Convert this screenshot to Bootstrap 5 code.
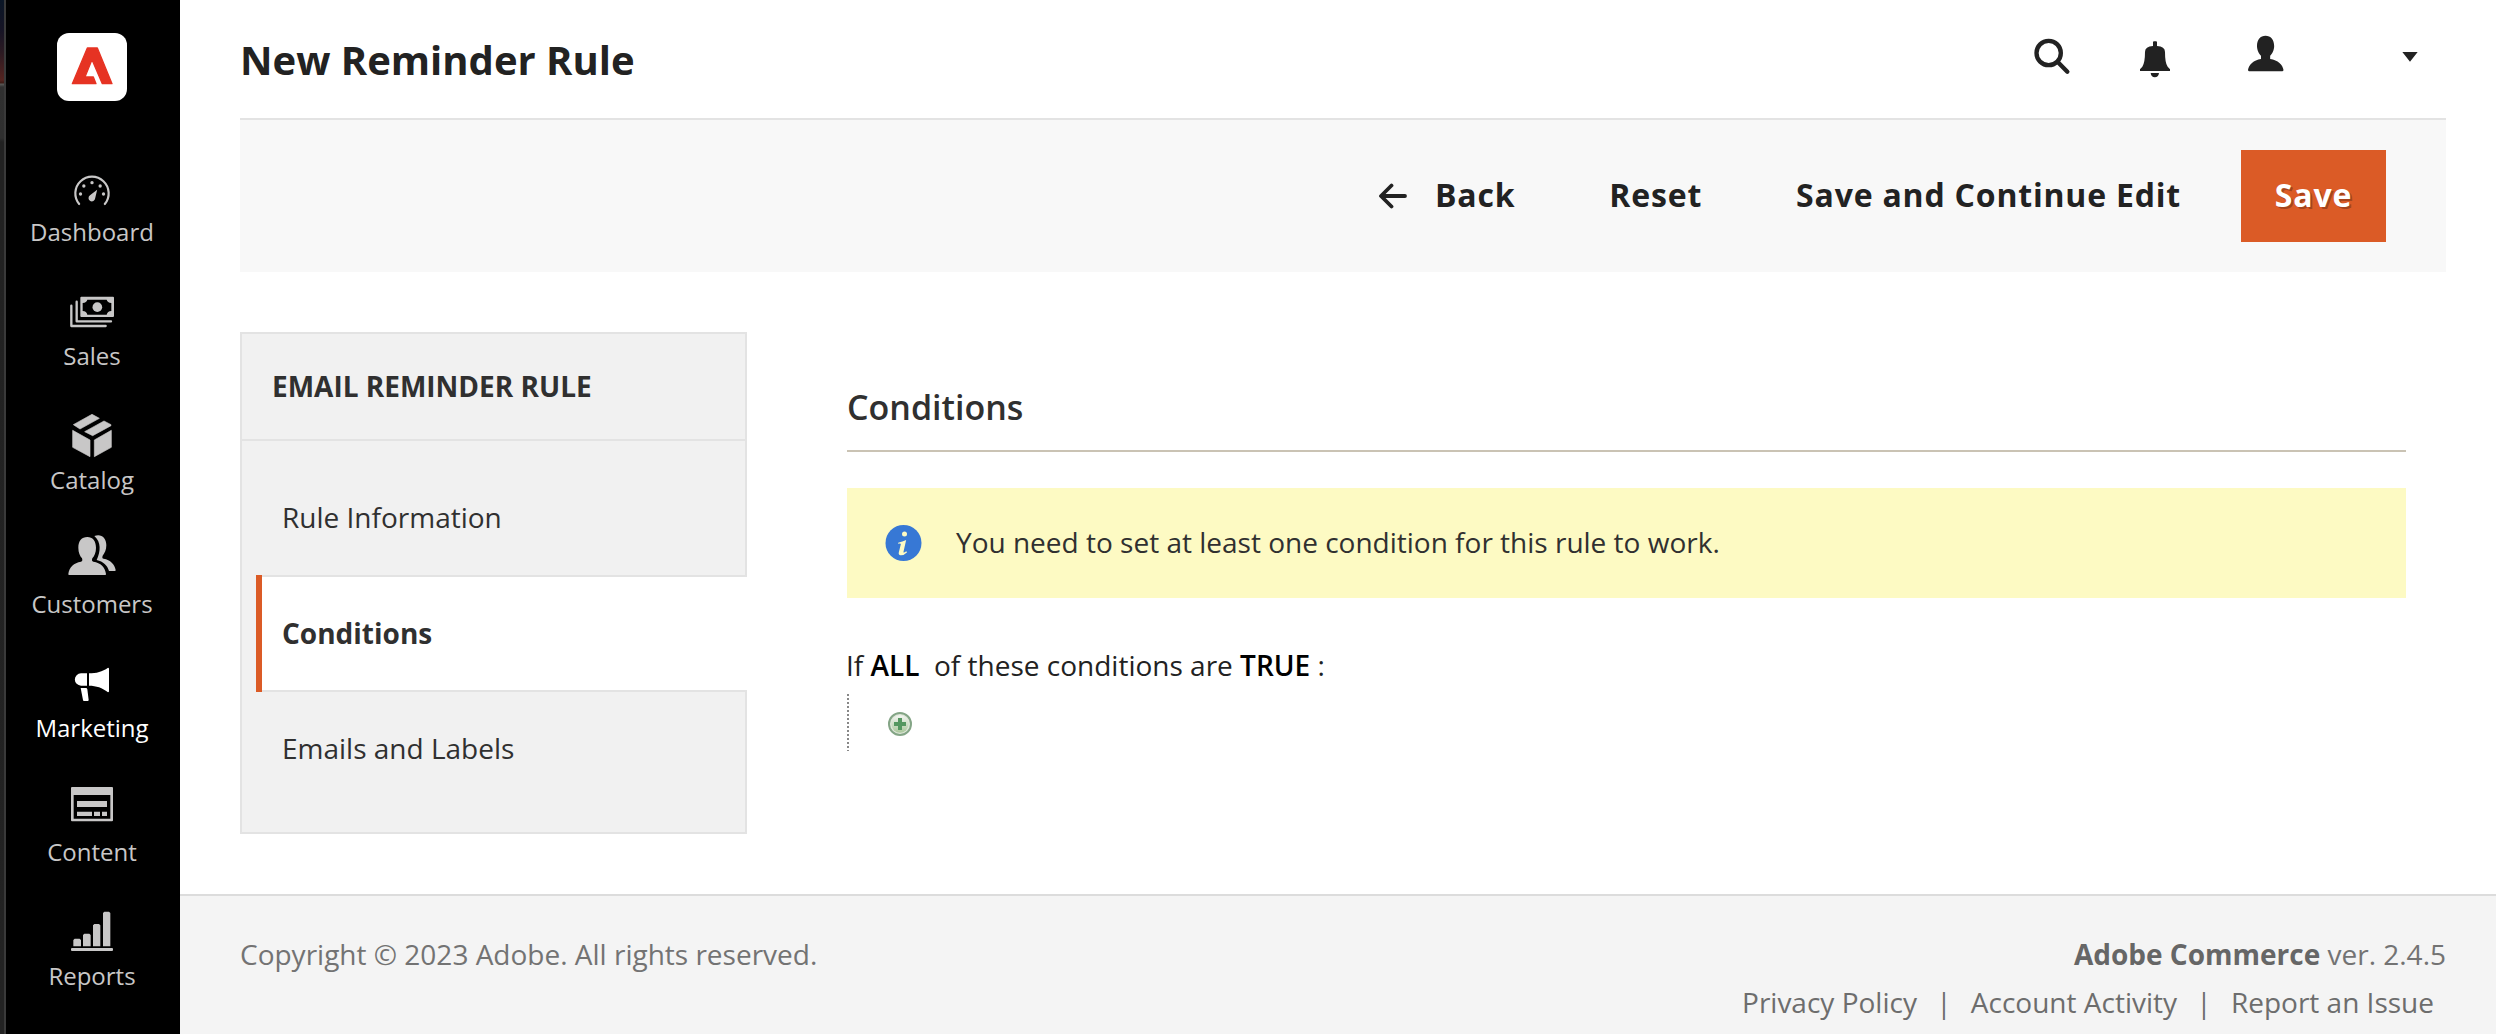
<!DOCTYPE html>
<html lang="en">
<head>
<meta charset="utf-8">
<meta name="viewport" content="width=device-width, initial-scale=1">
<title>New Reminder Rule</title>
<link href="https://cdn.jsdelivr.net/npm/bootstrap@5.3.0/dist/css/bootstrap.min.css" rel="stylesheet">
<style>
body{font-family:"Open Sans",sans-serif;font-size:28px;line-height:38px;color:#303030;background:#fff}
a{color:inherit;text-decoration:none}
svg{display:block;flex:none}
.shell{height:1034px;overflow:hidden}
.desk-edge{width:6px;flex:none;border-right:2px solid #3a3a3a;background:linear-gradient(#0a1626 0,#161425 30px,#2b1a22 52px,#552420 80px,#3a1a14 83px,#5a5a58 84px,#303030 87px,#2f2f2f 138px,#222 142px,#232323 100%)}
.side-menu{width:174px;flex:none;background:#000;color:#c8c7c7;padding-right:2px}
.brand{padding:33px 0 57px}
.side-menu .nav-link{padding:0;margin-bottom:37px;font-size:24px;line-height:27px;color:#c8c7c7}
.side-menu .nav-link.active{color:#fff}
.page-top{height:120px;margin:0 50px 0 60px;border-bottom:2px solid #e3e3e3;color:#222}
.page-top h1{font-size:40px;font-weight:700;line-height:54px;margin:0;padding-top:2px}
.actions{height:152px;margin:0 50px 0 60px;background:#f8f8f8;padding-right:60px;color:#222}
.actions .btn{font-size:32px;font-weight:700;line-height:44px;letter-spacing:.8px;padding:0 0 3px;border:0;border-radius:0;color:#222}
.actions .btn-reset{margin:0 94px}
.actions .btn-back{gap:27px}
.actions .btn-back svg{margin-top:2px}
.actions .btn-save{width:145px;height:92px;margin-left:60px;background:#db5b26;color:#fff;text-shadow:2px 2px 0 rgba(0,0,0,.25)}
.workspace{padding:60px 90px 0 60px;height:622px}
.tabs{width:507px;height:502px;flex:none;background:#f1f1f1;border:2px solid #e3e3e3}
.tabs h2{font-size:28px;font-weight:700;line-height:38px;height:107px;margin:0;padding:33px 30px 0;border-bottom:2px solid #e3e3e3}
.tabs .list{padding:20px 0 0 14px;margin-right:-2px}
.tabs .tab-item{display:block;padding:0 26px;line-height:38px}
.tabs .tab-item.first-tab{height:114px;padding-top:37px}
.tabs .tab-item.last-tab{padding-top:37px}
.tabs .tab-item.active{height:117px;font-weight:700;background:#fff;box-shadow:inset 0 2px #e3e3e3,inset 0 -2px #e3e3e3;border-left:6px solid #db5b26;padding:39px 20px}
.detail{margin-left:100px}
.detail h3{font-size:34px;font-weight:600;line-height:46px;margin:0;padding:52px 0 20px;border-bottom:2px solid #cac3b4}
.notice{height:110px;margin-top:36px;background:#fdfac3;padding-left:38px;gap:34px}
.notice span{padding-bottom:2px}
.rule-line{margin:48px 0 0 -1px;color:#222;white-space:pre}
.rule-line b{font-weight:600;color:#000}
.children{width:100px;height:57px;margin-top:10px;padding:18px 0 0 41px;background:repeating-linear-gradient(#888 0 2px,#fff 2px 4px) left top/2px 100% no-repeat}
.foot{height:140px;background:#f4f4f4;border-top:2px solid #dcdcdc;padding:39px 50px 0 60px;color:#737373}
.foot b{font-weight:700;color:#666}
.foot .links{margin-top:10px;padding-right:12px;gap:19.25px;color:#6d6d6d}
.tools{height:118px;padding-right:28px}
</style>
</head>
<body>
<div class="shell d-flex">
  <div class="desk-edge"></div>
  <aside class="side-menu">
    <div class="brand d-flex justify-content-center">
      <svg width="70" height="68" viewBox="0 0 210 204"><rect width="210" height="204" rx="36" fill="#fff"/><path fill="#e63323" stroke="#e63323" stroke-width="4" stroke-linejoin="round" d="M91 45h30l44 107h-29l-29-67h-4l-19 47h25l8 20H46z"/></svg>
    </div>
    <nav class="nav flex-column flex-nowrap text-center">
      <a class="nav-link" href="#">
        <svg class="mx-auto" width="60" height="60" viewBox="186 474 180 180"><path fill="none" stroke="#c8c7c7" stroke-width="6.500" stroke-linecap="round" d="M237.500 612A50 50 0 1 1 314.500 612"/><g fill="#c8c7c7"><circle cx="241.500" cy="582" r="5"/><circle cx="251.500" cy="558" r="5"/><circle cx="276" cy="548" r="5"/><circle cx="300.500" cy="558" r="5"/><circle cx="310.500" cy="582" r="5"/><path d="M291.500 569l-6 26a10 10 0 1 1-15.500-9z"/></g></svg>
        Dashboard</a>
      <a class="nav-link" href="#">
        <svg class="mx-auto" width="60" height="60" viewBox="186 846 180 180"><path fill="none" stroke="#c8c7c7" stroke-width="7" stroke-linecap="round" stroke-linejoin="round" d="M214 917v61h103M230 905v59h103"/><path fill="#c8c7c7" fill-rule="evenodd" d="M244 890h95q3 0 3 3v55q0 3-3 3h-95q-3 0-3-3v-55q0-3 3-3zM262 899q-2 9-14 10v24q12 1 14 11h58q2-10 14-11v-24q-12-1-14-10z"/><circle cx="292" cy="921.500" r="14.500" fill="#c8c7c7"/></svg>
        Sales</a>
      <a class="nav-link" href="#">
        <svg class="mx-auto" width="60" height="60" viewBox="186 138 180 180"><g fill="#c8c7c7" stroke="#c8c7c7" stroke-width="2" stroke-linejoin="round"><path d="M220 194l56-31 22 12-58 32zM254 215l58-32 21 11v3l-55 30zM218 211l52 29v50l-52-28zM334 211l-51 29v50l51-28z"/></g></svg>
        Catalog</a>
      <a class="nav-link" href="#">
        <svg class="mx-auto" width="60" height="60" viewBox="186 510 180 180"><g fill="#c8c7c7"><path d="M262 531c16 0 26 12 26 32 0 15-5 25-11 32-2 6-1 10 3 10 22 3 36 17 38 37q0 3-2 3H207q-2 0-2-3c2-20 17-34 38-37 4 0 5-4 3-10-6-7-11-17-11-32 0-20 10-32 27-32z"/><path d="M283 528c20-8 36 5 36 28 0 14-5 23-11 31-2 6-1 8 3 9 20 4 33 16 36 34q0 3-2 3h-18c-5-17-17-28-37-33 12-26 14-54-7-72z"/></g></svg>
        Customers</a>
      <a class="nav-link active" href="#">
        <svg class="mx-auto" width="60" height="60" viewBox="186 882 180 180"><g fill="#fff"><path d="M243 940h18v37h-18a18.500 18.500 0 0 1 0-37zM267 940c22 0 40-5 57-17q3 0 3 3v68q0 3-3 3c-17-14-35-20-57-20zM242 984h16q3 0 4 4l4 32q0 3-3 3h-11q-3 0-3-3z"/></g></svg>
        Marketing</a>
      <a class="nav-link" href="#">
        <svg class="mx-auto" width="60" height="60" viewBox="186 234 180 180"><path fill="#c8c7c7" fill-rule="evenodd" d="M216 261h120q3 0 3 3v97q0 3-3 3H216q-3 0-3-3v-97q0-3 3-3zM221 285v71h110v-71z"/><path fill="#c8c7c7" d="M231 303h90v18h-90zM231 335h45v13h-45zM282 335h18v13h-18zM306 335h15v13h-15z"/></svg>
        Content</a>
      <a class="nav-link" href="#">
        <svg class="mx-auto" width="60" height="60" viewBox="186 606 180 180"><g fill="#c8c7c7"><rect x="213" y="744" width="126" height="9" rx="3"/><path d="M220 720l4-4h15l4 4v19h-23zM249 705l4-4h15l4 4v34h-23zM279 676l4-4h14l4 4v63h-22zM309 639l4-4h14l4 4v100h-22z"/></g></svg>
        Reports</a>
    </nav>
  </aside>

  <div class="flex-grow-1 d-flex flex-column">
    <header class="page-top d-flex align-items-center justify-content-between">
      <h1>New Reminder Rule</h1>
      <div class="tools d-flex align-items-start">
        <svg width="384" height="118" viewBox="162 0 1152 354"><g fill="#222"><circle cx="206" cy="159" r="36.500" fill="none" stroke="#222" stroke-width="13"/><path d="M234 187l28 28" stroke="#222" stroke-width="13" stroke-linecap="round"/><path d="M519 127q0-3 3-3h6q3 0 3 3v11q24 2 24 18 0 34 8 44l7 8v5h-90v-5l7-8q8-12 8-44 0-16 24-18zM512 219h25q-2 13-12.500 13T512 219zM856.500 107c16 0 26 11 26 31 0 12-6 24-12 29v10c23 3 38 18 40 33q0 3-3 4H807q-3-1-3-4c2-15 17-30 39-33v-10c-6-5-12-17-12-29 0-20 10-31 25.500-31zM1267 156h46l-23 29z"/></g></svg>
      </div>
    </header>

    <div class="actions d-flex align-items-center justify-content-end">
      <button type="button" class="btn btn-back d-flex align-items-center">
        <svg width="30" height="26" viewBox="0 0 30 26"><path d="M13.500 2.500L3 13l10.500 10.500M3.500 13H27" fill="none" stroke="#222" stroke-width="3.800" stroke-linecap="round" stroke-linejoin="round"/></svg>Back</button>
      <button type="button" class="btn btn-reset">Reset</button>
      <button type="button" class="btn">Save and Continue Edit</button>
      <button type="button" class="btn btn-save">Save</button>
    </div>

    <main class="workspace d-flex">
      <section class="tabs">
        <h2>EMAIL REMINDER RULE</h2>
        <div class="list">
          <a class="tab-item first-tab" href="#">Rule Information</a>
          <a class="tab-item active" href="#">Conditions</a>
          <a class="tab-item last-tab" href="#">Emails and Labels</a>
        </div>
      </section>
      <section class="detail flex-grow-1">
        <h3>Conditions</h3>
        <div class="notice d-flex align-items-center">
          <svg width="37" height="36" viewBox="0 0 108 108"><circle cx="54" cy="54" r="54" fill="#3778d5"/><circle cx="57" cy="27" r="7.500" fill="#fdfac3"/><path d="M38 53q13-3 24-8l-8 35q-1 6 8-1l3 3q-10 10-20 9-7-1-5-9l6-24q1-4-8-2z" fill="#fdfac3"/></svg>
          <span>You need to set at least one condition for this rule to work.</span>
        </div>
        <p class="rule-line">If <b>ALL</b>&nbsp; of these conditions are <b>TRUE</b> :</p>
        <div class="children">
          <svg width="24" height="24" viewBox="0 0 24 24"><defs><linearGradient id="g" x2="0" y2="1"><stop offset="0" stop-color="#f4f6f2"/><stop offset="1" stop-color="#a9c79b"/></linearGradient></defs><circle cx="12" cy="12" r="11" fill="#dfe7da" stroke="#84a586" stroke-width="2"/><circle cx="12" cy="12" r="8.700" fill="url(#g)"/><path d="M10 6h4v4h4v4h-4v4h-4v-4H6v-4h4z" fill="#559760"/></svg>
        </div>
      </section>
    </main>

    <footer class="foot">
      <div class="d-flex justify-content-between">
        <span>Copyright © 2023 Adobe. All rights reserved.</span>
        <span><b>Adobe Commerce</b> ver. 2.4.5</span>
      </div>
      <div class="links d-flex justify-content-end">
        <a href="#">Privacy Policy</a><span>|</span><a href="#">Account Activity</a><span>|</span><a href="#">Report an Issue</a>
      </div>
    </footer>
  </div>
</div>
<script src="https://cdn.jsdelivr.net/npm/bootstrap@5.3.0/dist/js/bootstrap.bundle.min.js"></script>
</body>
</html>
